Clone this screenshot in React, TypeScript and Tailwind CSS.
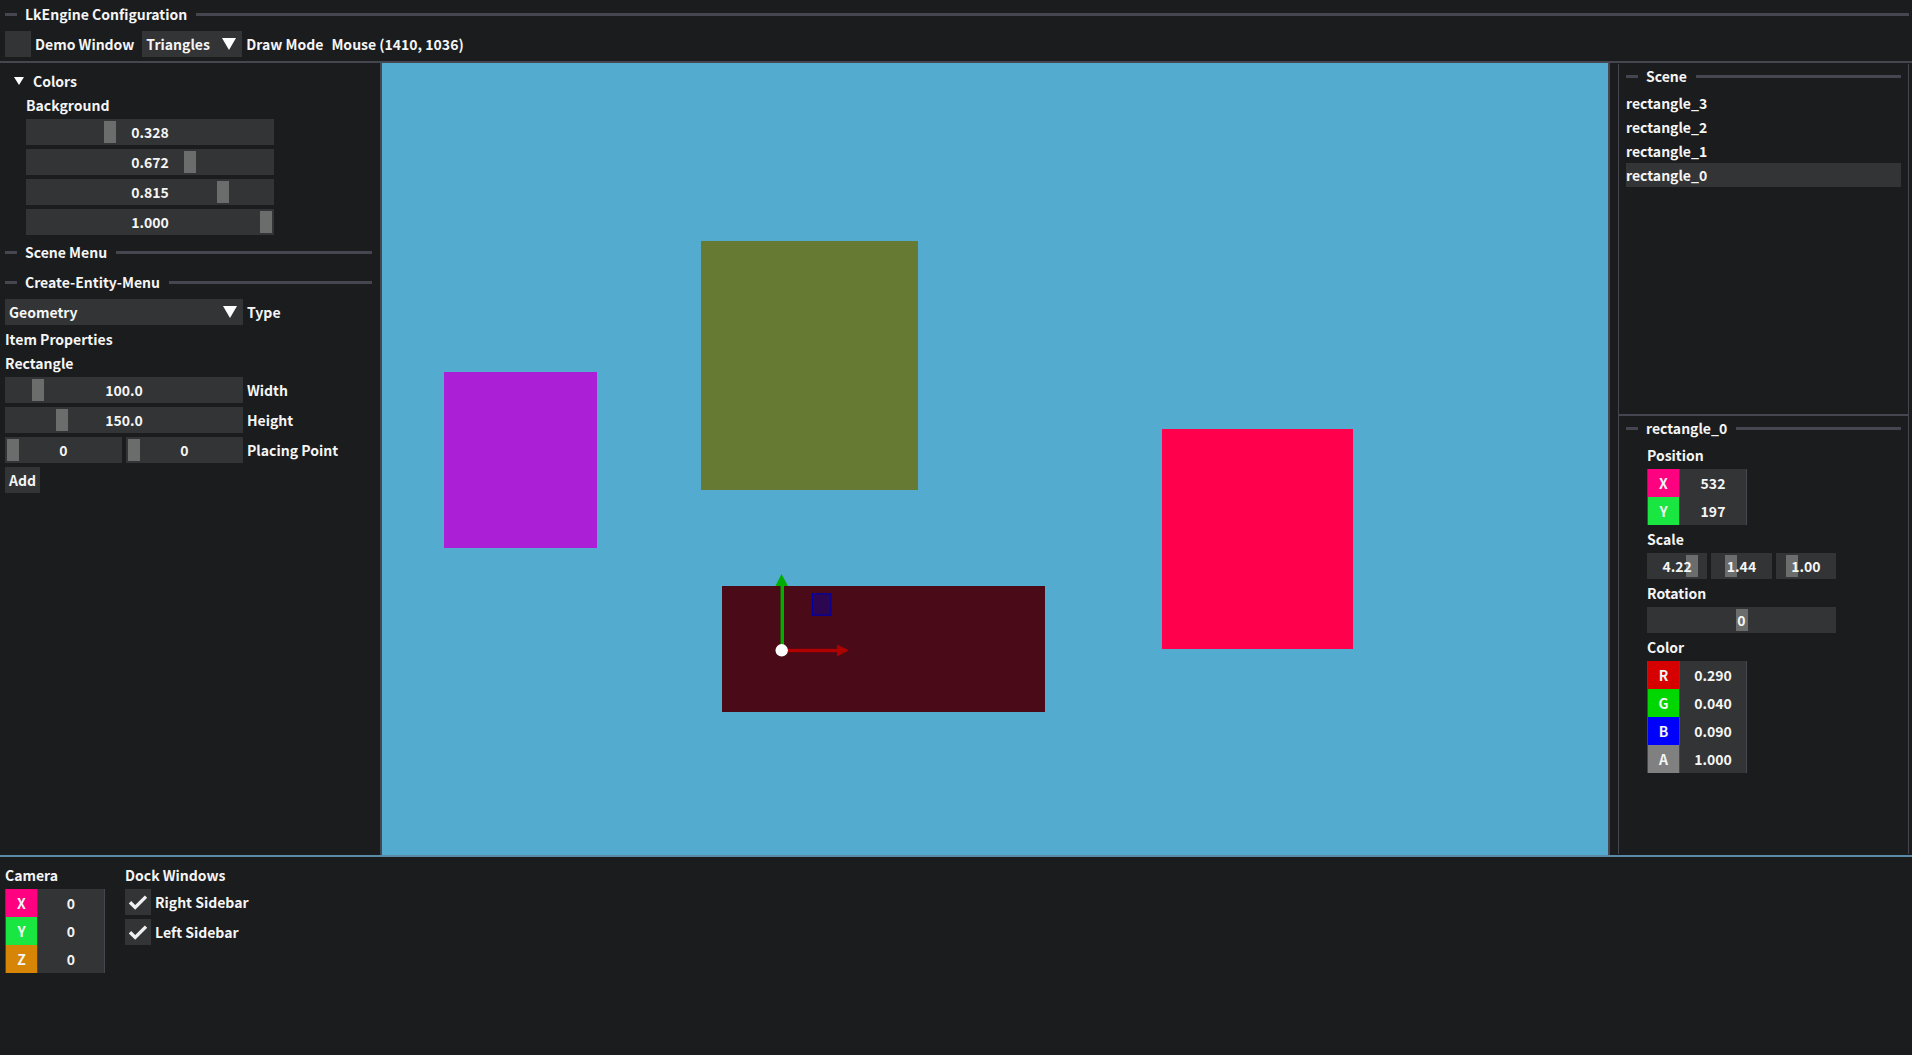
import React, { useId, useState } from "react";

const sliderClass =
  "block h-[26px] w-full cursor-pointer appearance-none bg-[#333436] px-0.5 outline-none " +
  "[&::-webkit-slider-thumb]:h-[22px] [&::-webkit-slider-thumb]:w-3 [&::-webkit-slider-thumb]:appearance-none [&::-webkit-slider-thumb]:rounded-none [&::-webkit-slider-thumb]:bg-[#6b6d6c]";

function Slider({
  label,
  min,
  max,
  initial,
  digits,
}: {
  label: string;
  min: number;
  max: number;
  initial: number;
  digits: number;
}) {
  const [value, setValue] = useState(initial);
  return (
    <div className="relative min-w-0 flex-1">
      <input
        type="range"
        aria-label={label}
        min={min}
        max={max}
        step="any"
        value={value}
        onChange={(e) => setValue(Number(e.target.value))}
        className={sliderClass}
      />
      <span className="pointer-events-none absolute inset-0 flex items-center justify-center">
        {value.toFixed(digits)}
      </span>
    </div>
  );
}

function SeparatorText({ children }: { children: React.ReactNode }) {
  return (
    <div className="flex h-[30px] shrink-0 items-center">
      <span className="h-[3px] w-3 bg-[#45464f]" />
      <h2 className="mr-[9px] ml-2 leading-5">{children}</h2>
      <span className="h-[3px] flex-1 bg-[#45464f]" />
    </div>
  );
}

function Combo({ label, options, width }: { label: string; options: string[]; width: string }) {
  const id = useId();
  return (
    <div className="flex items-center gap-1">
      <div className={"relative " + width}>
        <select id={id} className="block h-[26px] w-full appearance-none bg-[#333436] pr-6 pl-1 outline-none">
          {options.map((o) => (
            <option key={o}>{o}</option>
          ))}
        </select>
        <svg className="pointer-events-none absolute top-[7px] right-1.5 h-3 w-3.5" viewBox="0 0 14 12" fill="#fff">
          <path d="M0 0H14L7 12Z" />
        </svg>
      </div>
      <label htmlFor={id}>{label}</label>
    </div>
  );
}

function Checkbox({ label, checked }: { label: string; checked?: boolean }) {
  const [on, setOn] = useState(!!checked);
  return (
    <label className="flex items-center gap-1">
      <span className="relative size-[26px]">
        <input
          type="checkbox"
          checked={on}
          onChange={() => setOn(!on)}
          className="block size-[26px] appearance-none bg-[#333436]"
        />
        {on && (
          <svg
            className="pointer-events-none absolute inset-0 size-[26px]"
            viewBox="0 0 26 26"
            fill="none"
            stroke="#f0f0f0"
            strokeWidth="3.4"
          >
            <path d="M5 13.2L10.2 18.4L21 7.6" />
          </svg>
        )}
      </span>
      {label}
    </label>
  );
}

function VectorTable({ name, rows }: { name: string; rows: { axis: string; value: string; color: string }[] }) {
  return (
    <table aria-label={name} className="w-[100px] table-fixed border-separate border-spacing-0 border-x border-[#45464f]">
      <tbody>
        {rows.map((r) => (
          <tr key={r.axis}>
            <th scope="row" className={"h-7 w-8 border-r border-[#45464f] p-0 text-center font-bold " + r.color}>
              {r.axis}
            </th>
            <td className="h-7 p-0">
              <input
                aria-label={name + " " + r.axis}
                defaultValue={r.value}
                className="block h-7 w-full bg-[#333436] text-center outline-none"
              />
            </td>
          </tr>
        ))}
      </tbody>
    </table>
  );
}

function LeftSidebar() {
  const [open, setOpen] = useState(true);
  return (
    <aside className="flex w-[382px] shrink-0 flex-col border-r-2 border-[#45464f] pt-2 pr-2 pl-[5px]">
      <button
        type="button"
        aria-expanded={open}
        onClick={() => setOpen(!open)}
        className="mb-1 flex h-5 items-center gap-[9px] pl-[9px]"
      >
        <svg className="h-2 w-2.5" viewBox="0 0 10 8" fill="#fff">
          <path d="M0 0H10L5 8Z" />
        </svg>
        Colors
      </button>
      {open && (
        <div className="flex w-[269px] flex-col gap-1 pl-[21px]">
          <h3>Background</h3>
          <Slider label="Background red" min={0} max={1} initial={0.328} digits={3} />
          <Slider label="Background green" min={0} max={1} initial={0.672} digits={3} />
          <Slider label="Background blue" min={0} max={1} initial={0.815} digits={3} />
          <Slider label="Background alpha" min={0} max={1} initial={1} digits={3} />
        </div>
      )}
      <div className="py-0.5">
        <SeparatorText>Scene Menu</SeparatorText>
        <SeparatorText>Create-Entity-Menu</SeparatorText>
      </div>
      <div className="flex flex-col gap-1">
        <Combo label="Type" options={["Geometry", "Sprite"]} width="w-[238px]" />
        <p>Item Properties</p>
        <p>Rectangle</p>
        <div className="flex items-center gap-1">
          <div className="flex w-[238px]">
            <Slider label="Width" min={50} max={500} initial={100} digits={1} />
          </div>
          Width
        </div>
        <div className="flex items-center gap-1">
          <div className="flex w-[238px]">
            <Slider label="Height" min={50} max={500} initial={150} digits={1} />
          </div>
          Height
        </div>
        <div className="flex items-center gap-1">
          <div className="flex w-[238px] gap-1">
            <Slider label="Placing point X" min={0} max={1000} initial={0} digits={0} />
            <Slider label="Placing point Y" min={0} max={1000} initial={0} digits={0} />
          </div>
          Placing Point
        </div>
        <button type="button" className="h-[26px] self-start bg-[#333436] px-1">
          Add
        </button>
      </div>
    </aside>
  );
}

function Viewport() {
  return (
    <section aria-label="Viewport" className="relative min-w-0 flex-1 overflow-hidden bg-[#54abd0]">
      <div className="absolute top-[309px] left-[62px] h-[176px] w-[153px] bg-[#ab1fd6]" />
      <div className="absolute top-[178px] left-[319px] h-[249px] w-[217px] bg-[#667a33]" />
      <div className="absolute top-[366px] left-[780px] h-[220px] w-[191px] bg-[#ff004d]" />
      <div className="absolute top-[523px] left-[340px] h-[126px] w-[323px] bg-[#4a0a17]" />
      <svg className="absolute top-[503px] left-[388px] h-[100px] w-[84px]" viewBox="0 0 84 100">
        <path d="M12 84V18" stroke="#00a800" strokeOpacity="0.45" strokeWidth="4" />
        <path d="M12.5 84V18" stroke="#00b000" strokeWidth="3" />
        <path d="M5.5 20L11.5 8L18 20Z" fill="#00ad00" />
        <path d="M12 84.5H68" stroke="#a80000" strokeOpacity="0.45" strokeWidth="4" />
        <path d="M12 84.5H68" stroke="#b00000" strokeWidth="3" />
        <path d="M67 78.5L79 84.3L67 90.5Z" fill="#ad0000" />
        <rect x="42.5" y="27.8" width="18.4" height="21.4" fill="#0000aa" fillOpacity="0.4" stroke="#0000aa" strokeWidth="1.2" />
        <circle cx="11.7" cy="84.3" r="6.2" fill="#fff" />
      </svg>
    </section>
  );
}

function RightSidebar() {
  const [selected, setSelected] = useState("rectangle_0");
  return (
    <aside className="flex w-[304px] shrink-0 flex-col border-l-2 border-[#45464f] pt-px pr-[3px] pb-px pl-2">
      <div className="flex flex-1 flex-col border-x border-[#45464f]">
        <section className="h-[350px] shrink-0 px-[7px]">
          <div className="-mt-[3px]">
            <SeparatorText>Scene</SeparatorText>
          </div>
          <ul>
            {["rectangle_3", "rectangle_2", "rectangle_1", "rectangle_0"].map((n) => (
              <li key={n}>
                <button
                  type="button"
                  onClick={() => setSelected(n)}
                  className={"block h-6 w-full text-left " + (n === selected ? "bg-[#333436]" : "")}
                >
                  {n}
                </button>
              </li>
            ))}
          </ul>
        </section>
        <section className="flex-1 border-t-2 border-[#45464f] px-[7px]">
          <div className="-mt-[3px] mb-0.5">
            <SeparatorText>{selected}</SeparatorText>
          </div>
          <div className="flex w-[210px] flex-col gap-1 pl-[21px]">
            <h3>Position</h3>
            <VectorTable
              name="Position"
              rows={[
                { axis: "X", value: "532", color: "bg-[#ff0080]" },
                { axis: "Y", value: "197", color: "bg-[#1ae642]" },
              ]}
            />
            <h3>Scale</h3>
            <div className="flex gap-1">
              <Slider label="Scale X" min={0.1} max={5} initial={4.22} digits={2} />
              <Slider label="Scale Y" min={0.1} max={5} initial={1.44} digits={2} />
              <Slider label="Scale Z" min={0.1} max={5} initial={1} digits={2} />
            </div>
            <h3>Rotation</h3>
            <Slider label="Rotation" min={-180} max={180} initial={0} digits={0} />
            <h3>Color</h3>
            <VectorTable
              name="Color"
              rows={[
                { axis: "R", value: "0.290", color: "bg-[#d60000]" },
                { axis: "G", value: "0.040", color: "bg-[#00d600]" },
                { axis: "B", value: "0.090", color: "bg-[#0000ff]" },
                { axis: "A", value: "1.000", color: "bg-[#808080]" },
              ]}
            />
          </div>
        </section>
      </div>
    </aside>
  );
}

export default function App() {
  return (
    <div className="flex min-h-screen flex-col bg-[#1b1c1e] font-['Noto_Sans_CJK_SC',sans-serif] text-[14px] leading-5 font-bold text-[#f5f5f5]">
      <header className="border-b-2 border-[#45464f] pr-[3px] pb-1 pl-[5px]">
        <div className="-mt-px mb-0.5">
          <SeparatorText>LkEngine Configuration</SeparatorText>
        </div>
        <div className="flex items-center gap-2">
          <Checkbox label="Demo Window" />
          <Combo label="Draw Mode" options={["Triangles", "Lines"]} width="w-[100px]" />
          <p>Mouse (1410, 1036)</p>
        </div>
      </header>
      <main className="flex flex-1">
        <LeftSidebar />
        <Viewport />
        <RightSidebar />
      </main>
      <footer className="flex min-h-[200px] gap-5 border-t-2 border-[#5a8ba8] px-[5px] pt-2">
        <section className="flex flex-col gap-1">
          <h3>Camera</h3>
          <VectorTable
            name="Camera"
            rows={[
              { axis: "X", value: "0", color: "bg-[#ff0080]" },
              { axis: "Y", value: "0", color: "bg-[#1ae642]" },
              { axis: "Z", value: "0", color: "bg-[#d68506]" },
            ]}
          />
        </section>
        <section className="flex flex-col gap-1">
          <h3>Dock Windows</h3>
          <Checkbox label="Right Sidebar" checked />
          <Checkbox label="Left Sidebar" checked />
        </section>
      </footer>
    </div>
  );
}
